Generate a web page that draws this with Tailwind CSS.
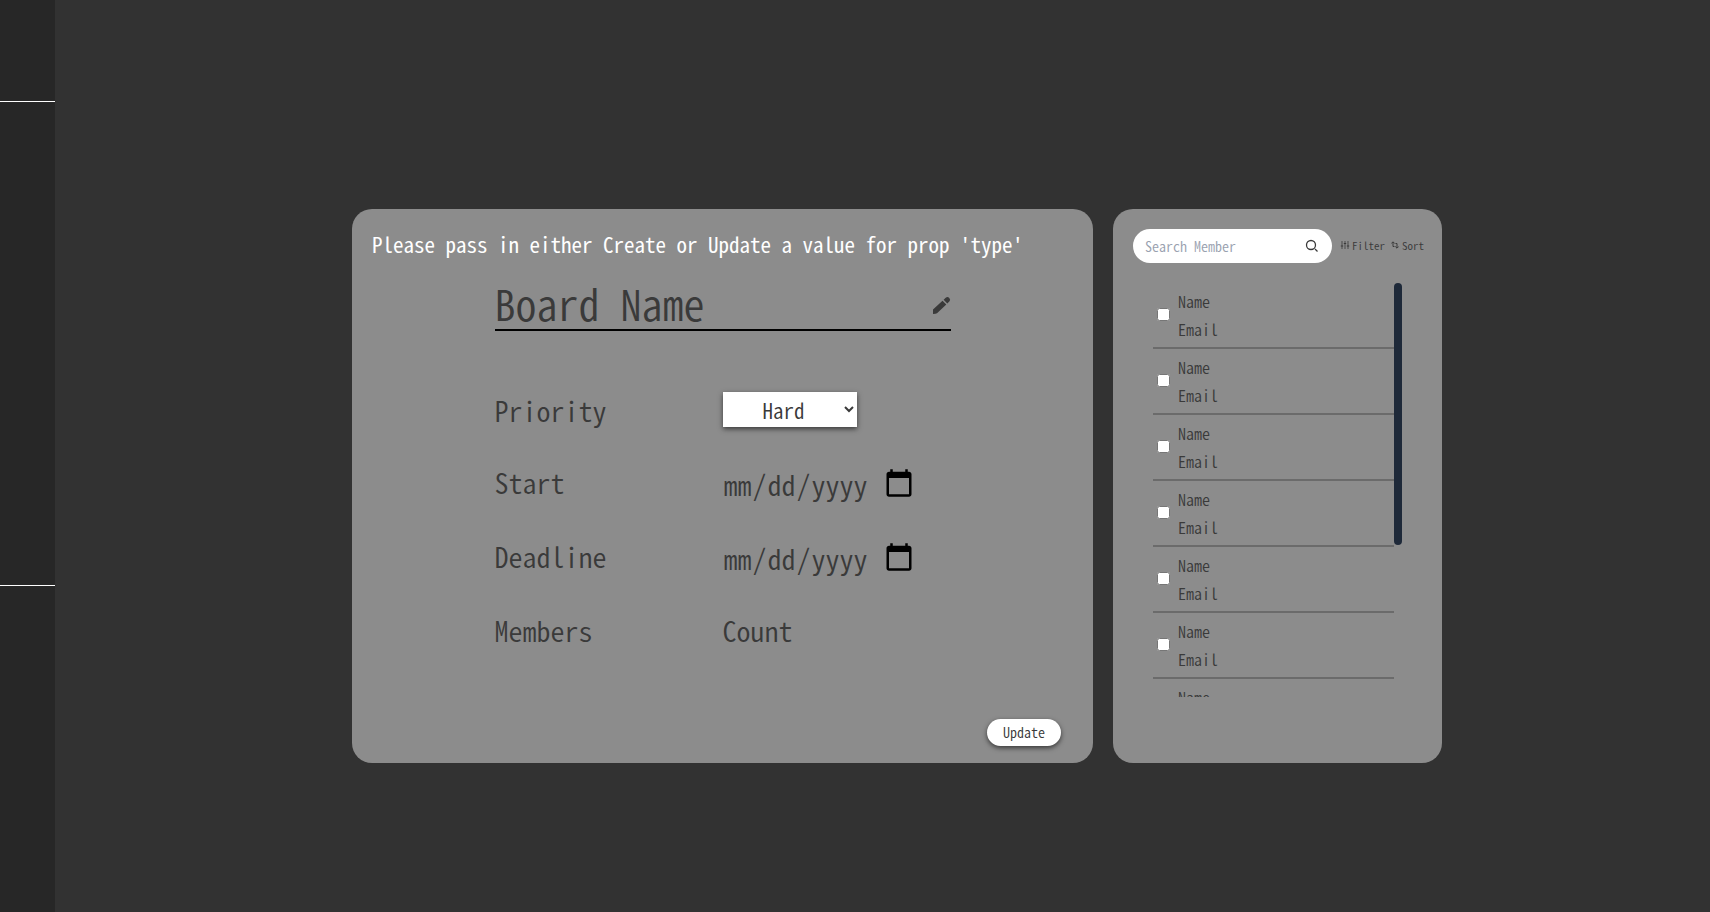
<!DOCTYPE html>
<html lang="en">
<head>
<meta charset="utf-8">
<title>Board</title>
<script src="https://cdn.jsdelivr.net/npm/@tailwindcss/browser@4"></script>
</head>
<body class="flex min-h-screen bg-[#323232] font-['Noto_Sans_CJK_JP',monospace] font-[350] text-[#3a3a3a] [font-feature-settings:'hwid']">
<nav aria-label="Sidebar" class="flex w-[55px] shrink-0 flex-col bg-[#272727]">
  <div class="h-[102px] border-b border-white"></div>
  <div class="h-[484px] border-b border-white"></div>
</nav>
<main class="flex flex-1 items-center justify-center pt-[60px] pl-[29px]">
  <div class="grid w-full max-w-[1090px] grid-cols-[741fr_329fr] gap-5">
    <form class="flex min-h-[554px] min-w-0 flex-col rounded-[20px] bg-[#8c8c8c] px-5 pt-5 pb-[17px]">
      <h1 class="h-8 text-[21px] leading-[30px] font-normal whitespace-nowrap text-white">Please pass in either Create or Update a value for prop 'type'</h1>
      <div class="mx-auto mt-4 w-full max-w-[456px]">
        <div class="flex h-[54px] items-center border-b-2 border-black">
          <input type="text" aria-label="Board Name" placeholder="Board Name" class="h-12 min-w-0 flex-1 bg-transparent text-[42px] leading-12 outline-none placeholder:text-[#3a3a3a]">
          <button type="button" aria-label="Edit name" class="mb-[14px] shrink-0 self-end"><svg class="block size-[19px]" viewBox="0 0 19 19" fill="#3a3a3a"><path d="M1 18V13.600L10.500 4.800L14.300 8.500L5 17.300Q4 18 1 18ZM11.600 3.800L13.700 1.700Q15.600.300 17.300 1.900Q18.900 3.700 17.500 5.300L15.300 7.500Z"/></svg></button>
        </div>
        <div class="mt-[43px] grid auto-rows-[74px] grid-cols-2 grid-rows-[71px] items-center text-[28px] leading-10">
          <label for="priority">Priority</label>
          <select id="priority" class="h-[35px] w-[134px] bg-white text-center text-[21px] leading-8 shadow-[0_2px_5px_rgba(0,0,0,0.6)]"><option>Hard</option><option>Medium</option><option>Easy</option></select>
          <label for="start">Start</label>
          <input id="start" type="date" class="w-[194px] bg-transparent pt-[3px] [&::-webkit-calendar-picker-indicator]:size-8">
          <label for="deadline">Deadline</label>
          <input id="deadline" type="date" class="w-[194px] bg-transparent pt-[3px] [&::-webkit-calendar-picker-indicator]:size-8">
          <span>Members</span>
          <span>Count</span>
        </div>
      </div>
      <button type="button" class="mt-auto mr-3 h-[27px] w-[74px] self-end rounded-full bg-white pb-[2px] text-sm shadow-[0_2px_5px_rgba(0,0,0,0.6)]">Update</button>
    </form>
    <section class="min-w-0 rounded-[20px] bg-[#8c8c8c] p-5">
      <div class="flex h-[34px] items-center">
        <div class="flex h-[34px] w-[199px] shrink-0 items-center rounded-full bg-white pr-3 pl-3">
          <input type="search" aria-label="Search Member" placeholder="Search Member" class="min-w-0 flex-1 bg-transparent text-sm outline-none placeholder:text-gray-400">
          <button type="button" aria-label="Search"><svg class="size-4" viewBox="0 0 16 16" fill="none" stroke="#3a3a3a" stroke-width="1.300"><circle cx="7" cy="7" r="4.500"/><path d="M11 11L13.500 13.500"/></svg></button>
        </div>
        <button type="button" class="mb-[2px] ml-2 flex items-center gap-[2px] text-[11px]"><svg class="size-[10px]" viewBox="0 0 10 10" fill="none" stroke="#3a3a3a" stroke-width=".8"><path d="M2 1V9M5 1V9M8 1V9"/><path stroke-width="1.200" d="M.800 6H3.200M3.800 3.500H6.200M6.800 6H9.200"/></svg>Filter</button>
        <button type="button" class="mb-[2px] ml-[6px] flex items-center gap-[3px] text-[11px]"><svg class="size-2" viewBox="0 0 8 8" fill="none" stroke="#3a3a3a"><path d="M.300 2.500L2 .800L3.700 2.500M2 1V5.500H3.500M4.300 5.500L6 7.200L7.700 5.500M6 7V2.500H4.500"/></svg>Sort</button>
      </div>
      <div class="relative mx-5 mt-5">
        <ul id="members" class="mr-2 h-[414px] overflow-y-auto [scrollbar-width:none]"></ul>
        <div class="absolute top-0 right-0 h-[262px] w-2 rounded-full bg-gray-800"></div>
      </div>
    </section>
  </div>
</main>
<template id="row">
  <li class="flex h-[66px] items-center border-b-2 border-[#6b6b6b] px-1 pb-px">
    <label class="flex items-center gap-2"><input type="checkbox" class="size-[13px]"><span class="flex flex-col text-base leading-7"><span>Name</span><span>Email</span></span></label>
  </li>
</template>
<script>
const list = document.getElementById('members'), row = document.getElementById('row');
for (let i = 0; i < 10; i++) list.append(row.content.cloneNode(true));
</script>
</body>
</html>
